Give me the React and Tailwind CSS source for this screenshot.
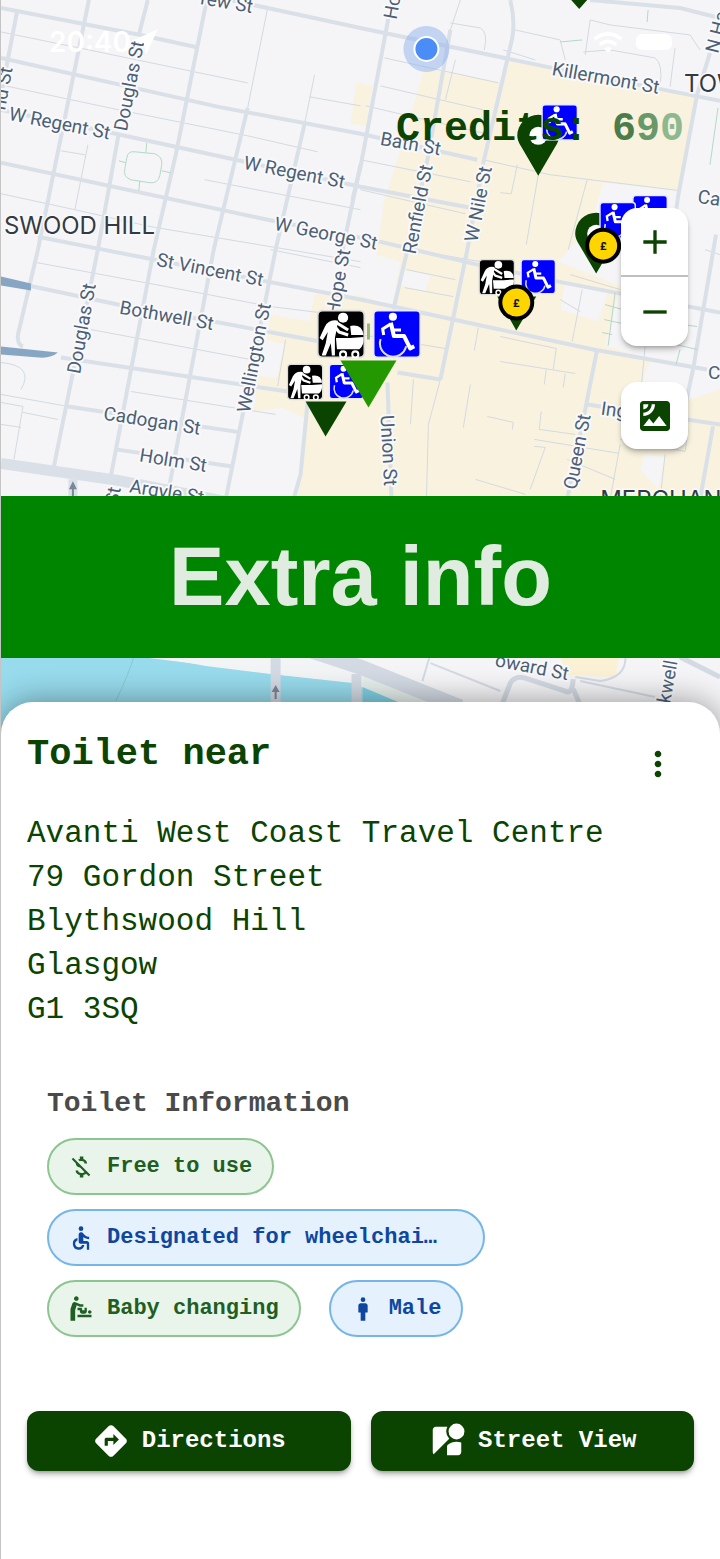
import {
  MdAccessible,
  MdAdd,
  MdBabyChangingStation,
  MdDirections,
  MdMan,
  MdMoneyOff,
  MdMoreVert,
  MdRemove,
  MdSatellite,
  MdStreetview,
  MdWifi,
} from 'react-icons/md'

const address = [
  'Avanti West Coast Travel Centre',
  '79 Gordon Street',
  'Blythswood Hill',
  'Glasgow',
  'G1 3SQ',
]

const mainRoads = [
  'M190-8L267 8L360 28L547 67L700 97L720 101',
  'M0 8L140 35L195 47',
  'M0 58L218 107L360 134L477 160',
  'M0 110L110 133L360 187L470 208',
  'M0 163L267 220L375 241L477 265L563 283L720 313',
  'M37 237L97 249L267 282L360 300L453 320L593 350L707 370',
  'M0 280L117 305L213 322L330 344',
  'M60 358L287 392M397 373L440 380',
  'M67 407L240 433',
  'M115 450L230 467',
  'M16 12L0 95',
  'M88 0L37 250L17 335Q16 345 22 347',
  'M147 0L138 35M118 133L97 250L53 467',
  'M206 0L175 155L153 250L110 477',
  'M247 108L213 250L168 490',
  'M304 124L275 250L225 500',
  'M360 165L340 260M307 403L300 475L293 500',
  'M388 18L360 167L352 200',
  'M510 0Q515 20 512 38L483 163L467 250L440 380',
  'M450 30L427 160L407 250L393 310',
  'M710 53L697 95L678 197L672 240',
  'M597 350L567 500M587 405L720 425',
  'M716 235L693 370L680 430M713 427L700 500',
  'M387 383L391 500',
  'M590 0L680 8L720 18',
]

const lanes = [
  'M0 32L88 50L247 83M0 85L118 110L247 136L317 152',
  'M267 8L247 108M314 75L304 124M309 97L360 106',
  'M204 180L360 210M60 151L84 155M87 145L74 210M0 194L74 210L150 227L360 262',
  'M384 58L498 83M380 86L483 110M365 106L490 135M360 160L470 182M360 190L465 214',
  'M450 23L480 28Q488 32 484 50M445 100L455 60M515 30L560 40L565 60M503 50L535 60',
  'M483 160L550 175L680 191M517 165L511 194L500 193M538 175L526 245M587 180L568 250',
  'M585 55L590 20L610 25L690 35L700 50M583 52L610 50L655 58Q663 64 660 85M675 48L670 87M460 0L450 30',
  'M36 263L155 285L270 307L360 318M90 330L250 360M130 392L275 415M270 250L360 268',
  'M20 390Q34 366 0 363M0 395L67 407M0 403L22 407L13 460M0 425L20 428M22 413L57 420M285 340L277 387',
  'M406 270L455 280M404 288L453 297M360 335L445 349M478 328L474 351M410 250L480 262M560 300L580 312M582 290L572 342',
  'M440 380L428 425L426 500M413 380L410 425M470 385L463 428M500 337L556 349L553 370M500 362L575 374M546 370L544 385M565 374L563 388',
  'M487 417L513 423L512 430M541 412L539 430L575 435M534 447L545 448L530 490M534 440L619 454M567 460L615 480M475 480L525 495',
  'M570 275L620 290M645 347L640 400M705 250L720 255M620 440L685 452L688 430M665 455L660 500M620 445L610 500',
]

const pathways = [
  'M118 161L125 163M146 143L145 153M161 171L170 173M139 181L138 191',
  'M126 158Q127 151 134 152L154 154Q162 157 161 165L159 176Q157 184 149 183L130 180Q122 177 124 169Z',
  'M615 293L608 346M605 305L650 318M604 320L650 330M602 333L612 335M683 325L697 327M676 345L697 350M680 350L676 365M560 42L582 40M710 165L718 108M648 10L647 22',
]

// x, y, rotation, label
const labels = [
  [199, 3, 10, 'rew St'],
  [7, 119, 11, 'W Regent St'],
  [242, 168, 11, 'W Regent St'],
  [273, 229, 11, 'W George St'],
  [155, 265, 11, 'St Vincent St'],
  [118, 313, 10, 'Bothwell St'],
  [102, 419, 9, 'Cadogan St'],
  [138, 461, 9, 'Holm St'],
  [128, 492, 9, 'Argyle St'],
  [551, 74, 10, 'Killermont St'],
  [379, 144, 10, 'Bath St'],
  [126, 131, -79, 'Douglas St'],
  [79, 374, -80, 'Douglas St'],
  [249, 413, -79, 'Wellington St'],
  [338, 316, -80, 'Hope St'],
  [415, 254, -79, 'Renfield St'],
  [477, 242, -79, 'W Nile St'],
  [576, 490, -79, 'Queen St'],
  [380, 415, 87, 'Union St'],
  [396, 19, -80, 'Ho'],
  [718, 53, -76, 'N Ha'],
  [4, 110, -80, 'nd St'],
  [697, 202, 8, 'Ca'],
  [600, 414, 8, 'Ing'],
  [708, 379, 0, 'C'],
  [117, 505, -80, 'St'],
  [494, 666, 11, 'oward St'],
  [670, 704, -80, 'kwell'],
]

function WheelchairSign({ x, y, size }) {
  return (
    <svg x={x} y={y} width={size} height={size} viewBox="0 0 48 48" fill="none">
      <rect x="1" y="1" width="46" height="46" rx="4" fill="#0000ff" stroke="#e8e8ff" strokeWidth="2" />
      <circle cx="20" cy="7" r="4" fill="#fff" />
      <path d="M18 13L21 26H31L37 38L41 36" stroke="#fff" strokeWidth="4" strokeLinejoin="round" />
      <path d="M18 14L10 19L11 25M20 20H28" stroke="#fff" strokeWidth="3" />
      <path d="M8 29A13 13 0 1 0 33 36" stroke="#d9e0ff" strokeWidth="2" />
    </svg>
  )
}

function BabySign({ x, y, size }) {
  return (
    <svg x={x} y={y} width={size} height={size} viewBox="0 0 48 48" fill="none">
      <rect x="1" y="1" width="46" height="46" rx="5" fill="#000" stroke="#ddd" strokeWidth="2" />
      <circle cx="26" cy="8" r="5" fill="#fff" />
      <path d="M21 11Q12 9 8 17L3 28L6 30L11 22L9 33L5 45H9L14 33L15 45H18L18 28L20 18Z" fill="#fff" />
      <path d="M16 14L22 22L31 25M18 12L31 20" stroke="#fff" strokeWidth="3" strokeLinejoin="round" />
      <path d="M19 28H33L46 27Q47 35 42 39H20Z" fill="#fff" />
      <path d="M34 25L33 16Q45 14 46 25Z" fill="#fff" />
      <circle cx="26" cy="44" r="3" fill="#000" stroke="#fff" strokeWidth="2" />
      <circle cx="38" cy="44" r="3" fill="#000" stroke="#fff" strokeWidth="2" />
    </svg>
  )
}

function Pin({ x, y }) {
  return (
    <g transform={`translate(${x} ${y})`}>
      <path fill="#0b4400" d="M21 61L4 32Q0 26 0 21A21 21 0 0 1 42 21Q42 26 38 32Z" />
      <circle cx="21" cy="21" r="9" fill="#fff" />
    </g>
  )
}

function Coin({ x, y }) {
  return (
    <g>
      <circle cx={x} cy={y} r="16" fill="#ffd500" stroke="#000" strokeWidth="4" />
      <text x={x} y={y + 4} textAnchor="middle" fontSize="11" fontWeight="700" fill="#111">
        £
      </text>
    </g>
  )
}

function StreetMap() {
  return (
    <svg viewBox="0 0 720 740" className="block w-full bg-[#f5f4f6] font-['Roboto',sans-serif]" role="img" aria-label="Map">
      <path
        fill="#f8f2df"
        d="M356 82L372 86L366 126L350 124ZM424 68L500 82L510 61L697 97L680 190L603 183L590 226L558 262L660 302L720 312V500H297L307 420L282 408L253 412L258 376L276 379L284 345L266 340L270 315L309 322L314 295L360 296L392 306L400 262L376 255L384 200L400 150Z"
      />
      <path
        fill="#f5f4f6"
        d="M565 283L608 292L598 322L560 310ZM618 293L720 313V390L690 400L640 390L650 360L605 346ZM402 270L430 276L425 292L400 286ZM645 455L665 458L658 490L640 470Z"
      />
      <g fill="none" stroke="#d3dae1" strokeWidth="1">
        {lanes.map((d) => (
          <path key={d} d={d} />
        ))}
      </g>
      <g fill="none" stroke="#dae0e7" strokeWidth="4" strokeLinejoin="round">
        {mainRoads.map((d) => (
          <path key={d} d={d} />
        ))}
        <path d="M0 464L117 481L240 505" strokeWidth="11" />
        <path d="M72 480V500" strokeWidth="9" />
      </g>
      <g fill="none" stroke="#b3d9c6" strokeWidth="1">
        {pathways.map((d) => (
          <path key={d} d={d} />
        ))}
      </g>
      <path d="M0 277L30 284V291L0 286ZM0 347L57 353Q50 359 38 358L0 355Z" fill="#87a6c4" />
      <path d="M72 482L76 490H73V498H71V490H68Z" fill="#7a8797" />

      {/* river and the streets south of the banner */}
      <path d="M0 655H140L205 667L270 675L352 684L400 706L430 740H0Z" fill="#97dbec" />
      <path d="M134 655Q128 675 115 702" fill="none" stroke="#86c9cf" />
      <path d="M140 658L270 674V655H140ZM281 655V676L352 683L362 655Z" fill="#f3f4f5" />
      <path d="M362 674L440 702L450 740H362Z" fill="#e6efec" />
      <path d="M362 688L400 704H362Z" fill="#7fd0e4" />
      <path d="M560 655H620L615 678L565 676Z" fill="#fbf2d6" />
      <g fill="none" stroke="#d3dae3">
        <path d="M275 655V705M356 675V705" strokeWidth="10" />
        <path d="M275 640L360 668L460 708" strokeWidth="15" />
        <path d="M500 710L510 684Q515 676 525 679L565 692Q572 696 573 680M573 690L580 706M680 658L720 678" strokeWidth="5" />
        <path d="M430 655L422 682M430 664L500 692M580 682L655 698M625 655Q628 678 600 682L575 678" strokeWidth="2" />
      </g>
      <path d="M275 686L279 693H276V700H274V693H271Z" fill="#7a8797" />

      <g
        transform="translate(0 1)"
        fontSize="19"
        fill="#4d5f76"
        stroke="#f9f9fa"
        strokeWidth="4"
        strokeLinejoin="round"
        className="[paint-order:stroke]"
      >
        {labels.map(([x, y, angle, name]) => (
          <text key={`${name}-${x}`} transform={`translate(${x} ${y}) rotate(${angle})`}>
            {name}
          </text>
        ))}
      </g>
      <g fontSize="24" fill="#333a42" stroke="#f9f9fa" strokeWidth="3" className="font-['Inter',sans-serif] [paint-order:stroke]">
        <text x="3" y="234">SWOOD HILL</text>
        <text x="684" y="92">TOW</text>
        <text x="600" y="509">MERCHAN</text>
      </g>

      <circle cx="426" cy="49" r="23" fill="#8fb4ee" opacity="0.5" />
      <circle cx="426" cy="49" r="12" fill="#4a8df6" stroke="#fff" strokeWidth="2" />

      <path d="M571 0H587L579 9Z" fill="#0b4400" />
      <Pin x={517} y={115} />
      <WheelchairSign x={541} y={104} size={37} />
      <Pin x={575} y={213} />
      <WheelchairSign x={632} y={195} size={36} />
      <WheelchairSign x={599} y={202} size={37} />
      <Coin x={603} y={246} />
      <path d="M497 297H536L516 331Z" fill="#0b4400" />
      <BabySign x={478} y={259} size={37} />
      <WheelchairSign x={520} y={259} size={36} />
      <Coin x={516} y={303} />
      <path d="M305 402H346L325 437Z" fill="#0b4400" />
      <BabySign x={286} y={364} size={37} />
      <WheelchairSign x={328} y={364} size={36} />
      <path d="M340 361H396L368 408Z" fill="#239800" />
      <path d="M368 324V340" stroke="#8fba7c" strokeWidth="3" />
      <BabySign x={316} y={310} size={49} />
      <WheelchairSign x={372} y={310} size={49} />
    </svg>
  )
}

function StatusBar() {
  return (
    <div className="flex h-9 items-center justify-between pr-12 pl-12 text-white">
      <div className="flex items-center">
        <span className="font-['Inter',sans-serif] text-[28px] font-semibold">20:40</span>
        <svg viewBox="0 0 24 24" className="size-7" fill="currentColor" aria-hidden="true">
          <path d="M23 1L13 23L11 13L1 11Z" />
        </svg>
      </div>
      <div className="flex items-center gap-3">
        <MdWifi className="size-8" />
        <span className="h-4 w-9 rounded-md bg-white" />
      </div>
    </div>
  )
}

const tones = {
  green: 'border-[#8cc590] bg-[#e9f5ea] text-[#1f5f24]',
  blue: 'border-[#76b5e8] bg-[#e5f2fd] text-[#0f47a0]',
}

function Chip({ icon: Icon, tone, className = '', children }) {
  return (
    <li
      className={`flex h-[57px] items-center gap-3 rounded-full border-2 pr-5 pl-[18px] text-[22px] font-bold ${tones[tone]} ${className}`}
    >
      <Icon className="size-7 shrink-0" />
      {children}
    </li>
  )
}

function ActionButton({ icon: Icon, children }) {
  return (
    <button
      type="button"
      className="flex h-[60px] flex-1 items-center justify-center gap-3 rounded-xl bg-[#0b4400] text-2xl font-bold text-white shadow-md shadow-black/30"
    >
      <Icon className="size-[38px]" />
      {children}
    </button>
  )
}

export default function App() {
  return (
    <main className="relative flex min-h-screen flex-col overflow-hidden border-l border-[#c4c4c4] bg-white font-['Liberation_Mono',monospace] text-[#0b4400]">
      <div className="absolute inset-x-0 top-0">
        <StreetMap />
      </div>

      <section className="relative flex h-[496px] flex-col pt-6">
        <StatusBar />
        <p className="mt-12 pr-9 text-right text-[40px] leading-[44px] font-bold whitespace-pre">
          Credits: <span className="text-[#4d7c4b]">6</span>
          <span className="text-[#699869]">9</span>
          <span className="text-[#8db991]">0</span>
        </p>
        <div className="mt-14 mr-8 flex flex-col gap-9 self-end">
          <div className="flex w-[67px] flex-col divide-y-2 divide-[#bfbfbf] rounded-2xl bg-white shadow-md shadow-black/25">
            <button type="button" aria-label="Zoom in" className="flex h-[69px] items-center justify-center">
              <MdAdd className="size-10" />
            </button>
            <button type="button" aria-label="Zoom out" className="flex h-[69px] items-center justify-center">
              <MdRemove className="size-10" />
            </button>
          </div>
          <button
            type="button"
            aria-label="Satellite view"
            className="flex size-[67px] items-center justify-center rounded-2xl bg-white shadow-md shadow-black/25"
          >
            <MdSatellite className="size-10" />
          </button>
        </div>
      </section>

      <h1 className="relative flex h-[162px] items-center justify-center bg-[#008500] font-['Liberation_Sans',sans-serif] text-[83px] font-bold text-[#e0ece0]">
        Extra info
      </h1>

      <section className="relative mt-11 flex-1 rounded-t-[32px] bg-white px-[26px] pt-[30px] pb-[86px] shadow-[0_0_32px_rgba(0,0,0,0.4)]">
        <div className="flex items-start justify-between pr-4">
          <h2 className="text-[37px] leading-[44px] font-bold">Toilet near</h2>
          <button type="button" aria-label="More options" className="mt-3">
            <MdMoreVert className="size-10" />
          </button>
        </div>

        <address className="mt-7 text-[31px] leading-[44px] not-italic">
          {address.map((line) => (
            <p key={line}>{line}</p>
          ))}
        </address>

        <div className="mt-[54px] px-5">
          <h3 className="text-[28px] leading-9 font-bold text-[#4a4a4a]">Toilet Information</h3>
          <ul className="mt-4 flex flex-wrap gap-x-7 gap-y-[14px]">
            <Chip icon={MdMoneyOff} tone="green">Free to use</Chip>
            <Chip icon={MdAccessible} tone="blue" className="w-[438px]">Designated for wheelchai…</Chip>
            <Chip icon={MdBabyChangingStation} tone="green">Baby changing</Chip>
            <Chip icon={MdMan} tone="blue">Male</Chip>
          </ul>
        </div>

        <div className="mt-[74px] flex gap-5">
          <ActionButton icon={MdDirections}>Directions</ActionButton>
          <ActionButton icon={MdStreetview}>Street View</ActionButton>
        </div>
      </section>
    </main>
  )
}
